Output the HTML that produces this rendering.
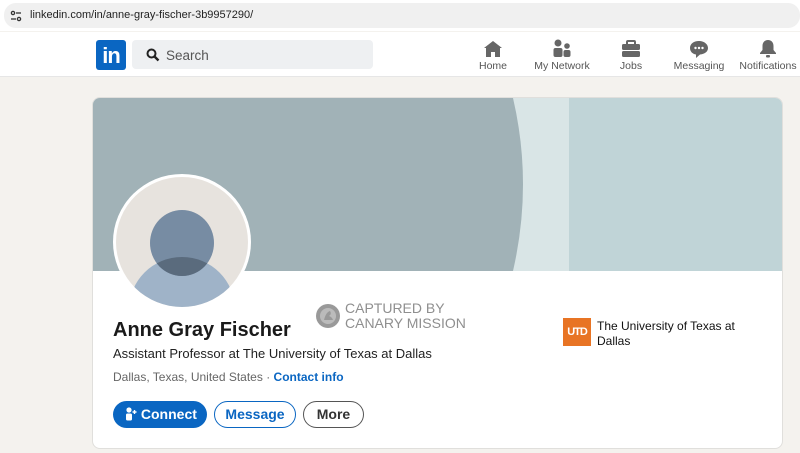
<!DOCTYPE html>
<html><head><meta charset="utf-8"><style>
*{margin:0;padding:0;box-sizing:border-box}
body{width:800px;height:453px;overflow:hidden;background:#f4f2ee;font-family:"Liberation Sans",sans-serif;position:relative}
.abs{position:absolute}
</style></head><body>
<div class="abs" style="left:0;top:0;width:800px;height:31px;background:#fff"></div>
<div class="abs" style="left:4px;top:3px;width:796px;height:25px;background:#f0f0f0;border-radius:12px"></div>
<svg class="abs" style="left:10px;top:10px" width="12" height="12" viewBox="0 0 12 12"><g fill="none" stroke="#333" stroke-width="1.3"><circle cx="3" cy="3" r="1.6"/><line x1="6" y1="3" x2="11" y2="3"/><circle cx="9" cy="9" r="1.6"/><line x1="1" y1="9" x2="6" y2="9"/></g></svg>
<div class="abs" style="left:30px;top:9px;font-size:11px;color:#222">linkedin.com/in/anne-gray-fischer-3b9957290/</div>
<div class="abs" style="left:0;top:32px;width:800px;height:45px;background:#fff;border-bottom:1px solid #e6e6e6"></div>
<div class="abs" style="left:96px;top:40px;width:30px;height:30px;background:#0a66c2;border-radius:3px;color:#fff;font-weight:bold;font-size:22px;text-align:center;line-height:31px;letter-spacing:-1px">in</div>
<div class="abs" style="left:132px;top:40px;width:241px;height:29px;background:#eef0f2;border-radius:4px"></div>
<svg class="abs" style="left:146px;top:48px" width="14" height="14" viewBox="0 0 14 14"><circle cx="5.5" cy="5.5" r="4" fill="none" stroke="#222" stroke-width="2"/><line x1="8.5" y1="8.5" x2="12.5" y2="12.5" stroke="#222" stroke-width="2.4"/></svg>
<div class="abs" style="left:166px;top:48px;font-size:13.5px;color:#555">Search</div>
<svg class="abs" style="left:483px;top:40px" width="20" height="18" viewBox="0 0 20 18"><path d="M10 1L1 8h2v9h5v-5h4v5h5V8h2z" fill="#666"/></svg>
<svg class="abs" style="left:552px;top:39px" width="20" height="19" viewBox="0 0 20 19"><circle cx="6" cy="4" r="3.5" fill="#666"/><rect x="1.5" y="9" width="9" height="9" rx="2" fill="#666"/><circle cx="15" cy="7" r="2.8" fill="#666"/><rect x="11.5" y="11" width="7" height="7" rx="2" fill="#666"/></svg>
<svg class="abs" style="left:621px;top:40px" width="20" height="18" viewBox="0 0 20 18"><rect x="6" y="1" width="8" height="4" rx="1" fill="none" stroke="#666" stroke-width="2"/><rect x="1" y="4" width="18" height="6" rx="1.5" fill="#666"/><rect x="1" y="11" width="18" height="6" rx="1.5" fill="#666"/></svg>
<svg class="abs" style="left:689px;top:40px" width="20" height="18" viewBox="0 0 20 18"><path d="M10 1C4.5 1 1 4 1 8s3 6 6 6.5V18l4-3.5C16 14 19 11.5 19 8S15.5 1 10 1z" fill="#666"/><circle cx="6.5" cy="8" r="1.2" fill="#fff"/><circle cx="10" cy="8" r="1.2" fill="#fff"/><circle cx="13.5" cy="8" r="1.2" fill="#fff"/></svg>
<svg class="abs" style="left:758px;top:39px" width="20" height="19" viewBox="0 0 20 19"><path d="M10 1c-3.5 0-5.5 2.5-5.5 6v4L2 14v1h16v-1l-2.5-3V7C15.5 3.5 13.5 1 10 1z" fill="#666"/><rect x="8" y="16" width="4" height="2.5" rx="1" fill="#666"/></svg>
<div class="abs" style="top:60px;left:470px;width:46px;text-align:center;font-size:10.5px;color:#555">Home</div>
<div class="abs" style="top:60px;left:527px;width:70px;text-align:center;font-size:10.5px;color:#555">My Network</div>
<div class="abs" style="top:60px;left:610px;width:42px;text-align:center;font-size:10.5px;color:#555">Jobs</div>
<div class="abs" style="top:60px;left:670px;width:58px;text-align:center;font-size:10.5px;color:#555">Messaging</div>
<div class="abs" style="top:60px;left:735px;width:66px;text-align:center;font-size:10.5px;color:#555">Notifications</div>
<div class="abs" style="left:92px;top:97px;width:691px;height:352px;background:#fff;border-radius:8px;border:1px solid #e0dfdc;overflow:hidden">
<svg width="691" height="173" style="display:block"><rect width="691" height="173" fill="#c0d4d7"/><rect x="420" width="56" height="173" fill="#d9e5e6"/><path d="M0 0H420Q440 86 420 173H0z" fill="#a1b2b7"/></svg>
</div>
<div class="abs" style="left:113px;top:174px;width:138px;height:136px;border-radius:50%;background:#fff;padding:3px">
<svg width="132" height="130" viewBox="0 0 132 130" style="display:block"><defs><clipPath id="c"><ellipse cx="66" cy="65" rx="66" ry="65"/></clipPath><clipPath id="h"><ellipse cx="66" cy="66" rx="32" ry="33"/></clipPath></defs><g clip-path="url(#c)"><rect width="132" height="130" fill="#e7e3de"/><circle cx="66" cy="133" r="53" fill="#9fb3c8"/><ellipse cx="66" cy="66" rx="32" ry="33" fill="#778ca3"/><circle cx="66" cy="133" r="53" fill="#5a6b7d" clip-path="url(#h)"/></g></svg>
</div>
<svg class="abs" style="left:316px;top:304px" width="24" height="24" viewBox="0 0 24 24"><circle cx="12" cy="12" r="12" fill="#999"/><circle cx="12" cy="12" r="8" fill="#bbb"/><path d="M8 16Q10 8 14 7q2 3-1 5 3 1 4 4z" fill="#999"/></svg>
<div class="abs" style="left:345px;top:301px;font-size:14px;line-height:15px;color:#8f8f8f">CAPTURED BY<br>CANARY MISSION</div>
<div class="abs" style="left:113px;top:319px;font-size:20px;color:#1a1a1a;font-weight:600">Anne Gray Fischer</div>
<div class="abs" style="left:113px;top:346px;font-size:13px;color:#222">Assistant Professor at The University of Texas at Dallas</div>
<div class="abs" style="left:113px;top:370px;font-size:12px;color:#666">Dallas, Texas, United States · <span style="color:#0a66c2;font-weight:bold">Contact info</span></div>
<div class="abs" style="left:563px;top:318px;width:28px;height:28px;background:#e87424;color:#fff;font-weight:bold;font-size:11px;text-align:center;line-height:28px;letter-spacing:-1px">UTD</div>
<div class="abs" style="left:597px;top:319px;font-size:12px;line-height:15px;color:#111">The University of Texas at<br>Dallas</div>
<div class="abs" style="left:113px;top:401px;width:94px;height:27px;border-radius:14px;background:#0a66c2;color:#fff;font-weight:bold;font-size:14px;line-height:27px;padding-left:12px"><svg width="12" height="14" viewBox="0 0 12 14" style="vertical-align:-2px"><circle cx="4" cy="3" r="2.6" fill="#fff"/><rect x="1" y="6.5" width="6" height="7" rx="1.5" fill="#fff"/><path d="M9.5 3v4M7.5 5h4" stroke="#fff" stroke-width="1.4"/></svg> Connect</div>
<div class="abs" style="left:214px;top:401px;width:82px;height:27px;border-radius:14px;border:1px solid #0a66c2;color:#0a66c2;font-weight:bold;font-size:14px;line-height:25px;text-align:center">Message</div>
<div class="abs" style="left:303px;top:401px;width:61px;height:27px;border-radius:14px;border:1px solid #555;color:#333;font-weight:bold;font-size:14px;line-height:25px;text-align:center">More</div>
</body></html>
